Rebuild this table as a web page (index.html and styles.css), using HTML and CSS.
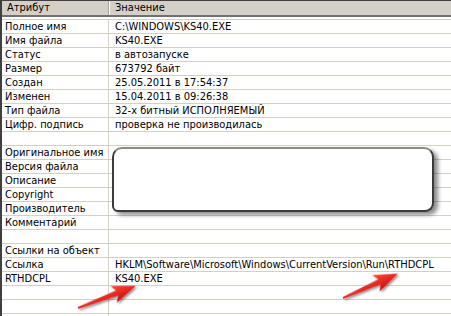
FILE: index.html
```html
<!DOCTYPE html>
<html>
<head>
<meta charset="utf-8">
<link rel="stylesheet" href="styles.css">
</head>
<body>
<div class="list">
  <div class="header">
    <div class="hcell c1">Атрибут</div>
    <div class="hcell c2">Значение</div>
  </div>
  <div class="gap"></div>
  <div class="rows">
    <div class="row"><div class="cell c1">Полное имя</div><div class="cell c2">C:\WINDOWS\KS40.EXE</div></div>
    <div class="row"><div class="cell c1">Имя файла</div><div class="cell c2">KS40.EXE</div></div>
    <div class="row"><div class="cell c1">Статус</div><div class="cell c2">в автозапуске</div></div>
    <div class="row"><div class="cell c1">Размер</div><div class="cell c2">673792 байт</div></div>
    <div class="row"><div class="cell c1">Создан</div><div class="cell c2">25.05.2011 в 17:54:37</div></div>
    <div class="row"><div class="cell c1">Изменен</div><div class="cell c2">15.04.2011 в 09:26:38</div></div>
    <div class="row"><div class="cell c1">Тип файла</div><div class="cell c2">32-х битный ИСПОЛНЯЕМЫЙ</div></div>
    <div class="row"><div class="cell c1">Цифр. подпись</div><div class="cell c2">проверка не производилась</div></div>
    <div class="row"><div class="cell c1"></div><div class="cell c2"></div></div>
    <div class="row"><div class="cell c1">Оригинальное имя</div><div class="cell c2"></div></div>
    <div class="row"><div class="cell c1">Версия файла</div><div class="cell c2"></div></div>
    <div class="row"><div class="cell c1">Описание</div><div class="cell c2"></div></div>
    <div class="row"><div class="cell c1">Copyright</div><div class="cell c2"></div></div>
    <div class="row"><div class="cell c1">Производитель</div><div class="cell c2"></div></div>
    <div class="row"><div class="cell c1">Комментарий</div><div class="cell c2"></div></div>
    <div class="row"><div class="cell c1"></div><div class="cell c2"></div></div>
    <div class="row"><div class="cell c1">Ссылки на объект</div><div class="cell c2"></div></div>
    <div class="row"><div class="cell c1">Ссылка</div><div class="cell c2">HKLM\Software\Microsoft\Windows\CurrentVersion\Run\RTHDCPL</div></div>
    <div class="row"><div class="cell c1">RTHDCPL</div><div class="cell c2">KS40.EXE</div></div>
    <div class="row"><div class="cell c1"></div><div class="cell c2"></div></div>
    <div class="row"><div class="cell c1"></div><div class="cell c2"></div></div>
    <div class="row"><div class="cell c1"></div><div class="cell c2"></div></div>
  </div>
</div>
<div class="blank-box"></div>
<svg class="arrows" width="451" height="316" viewBox="0 0 451 316">
  <defs>
    <filter id="sh" x="-20%" y="-50%" width="140%" height="200%">
      <feDropShadow dx="1" dy="2" stdDeviation="1.2" flood-color="#000" flood-opacity="0.45"/>
    </filter>
    <linearGradient id="rg" x1="0" y1="0" x2="0" y2="1">
      <stop offset="0" stop-color="#ff4a3a"/>
      <stop offset="1" stop-color="#c80c0c"/>
    </linearGradient>
  </defs>
  <g transform="translate(78 308) rotate(-21)" filter="url(#sh)">
    <polygon points="0,-1 42,-2.8 38,-9 62,0 38,9 42,2.8 0,1" fill="url(#rg)"/>
  </g>
  <g transform="translate(343 298) rotate(-24)" filter="url(#sh)">
    <polygon points="0,-1 40,-2.8 36,-9 60,0 36,9 40,2.8 0,1" fill="url(#rg)"/>
  </g>
</svg>
</body>
</html>
```
FILE: styles.css
```css
html, body {
  margin: 0;
  padding: 0;
  background: #ffffff;
  width: 451px;
  height: 316px;
  overflow: hidden;
}
body {
  position: relative;
  font-family: "DejaVu Sans", "Liberation Sans", sans-serif;
  font-stretch: condensed;
  font-size: 11px;
  color: #000;
}
.list {
  border-top: 1px solid #404040;
  border-left: 2px solid #404040;
  height: 315px;
  overflow: hidden;
}
.header {
  display: flex;
  height: 14px;
  background: #d4d0c8;
  border-bottom: 2px solid #707070;
}
.hcell {
  line-height: 14px;
  white-space: nowrap;
}
.hcell.c1 {
  width: 101px;
  padding-left: 5px;
  border-right: 1px solid #a8a49c;
  box-shadow: 1px 0 0 #ffffff;
}
.hcell.c2 {
  flex: 1;
  padding-left: 6px;
}
.gap {
  height: 2px;
}
.rows {
  border-top: 1px solid #d4d0c8;
}
.row {
  display: flex;
  height: 13px;
  border-bottom: 1px solid #d4d0c8;
}
.cell {
  line-height: 13px;
  white-space: nowrap;
  overflow: hidden;
}
.cell.c1 {
  width: 103px;
  padding-left: 3px;
  border-right: 1px solid #d4d0c8;
}
.cell.c2 {
  flex: 1;
  padding-left: 6px;
}
.blank-box {
  position: absolute;
  left: 112px;
  top: 147px;
  width: 318px;
  height: 61px;
  background: #ffffff;
  border: 2px solid #3a3a3a;
  border-top-color: #8a8a8a;
  border-radius: 10px 10px 9px 6px;
  box-shadow: 4px 3px 4px rgba(0, 0, 0, 0.45);
}
.arrows {
  position: absolute;
  left: 0;
  top: 0;
}
```
